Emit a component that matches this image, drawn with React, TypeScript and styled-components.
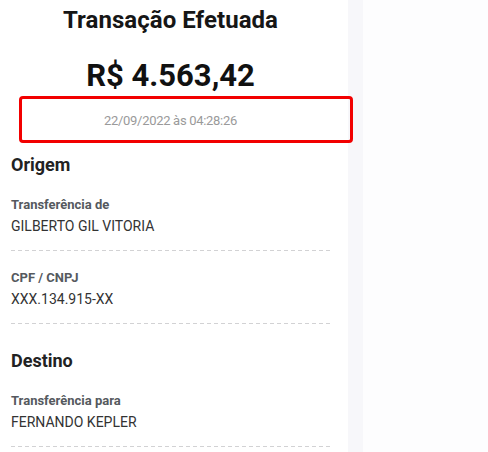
import React from "react";
import styled, { createGlobalStyle } from "styled-components";

const Global = createGlobalStyle`
  html, body { margin: 0; padding: 0; background: #fdfdfe; }
  body { font-family: Roboto, "Noto Sans", Arial, sans-serif; -webkit-font-smoothing: antialiased; }
  * { box-sizing: border-box; }
`;

const Screen = styled.div`
  display: flex;
  height: 452px;
  overflow: hidden;
`;

const Panel = styled.main`
  width: 348px;
  flex: none;
  background: #ffffff;
  padding: 5px 18px 0 11px;
  display: flex;
  flex-direction: column;
`;

const Strip = styled.div`
  width: 15px;
  flex: none;
  background: #f7f7fa;
`;

const Rest = styled.div`
  flex: 1;
  background: #fdfdfe;
`;

const Title = styled.h1`
  margin: 0;
  font-size: 24px;
  line-height: 30px;
  font-weight: 700;
  color: #161616;
  text-align: center;
  letter-spacing: 0.05px;
`;

const Amount = styled.div`
  margin-top: 23px;
  font-size: 31px;
  line-height: 36px;
  font-weight: 700;
  color: #111111;
  text-align: center;
`;

const DateLine = styled.div`
  position: relative;
  margin-top: 17px;
  font-size: 13px;
  line-height: 20px;
  color: #9a9a9a;
  text-align: center;
  letter-spacing: -0.3px;
`;

const Highlight = styled.span`
  position: absolute;
  left: 8px;
  top: -15px;
  width: 334px;
  height: 47px;
  border: 3px solid #f20000;
  border-radius: 4px;
  pointer-events: none;
`;

const Section = styled.section<{ $gap: number }>`
  margin-top: ${(p) => p.$gap}px;
  display: flex;
  flex-direction: column;
`;

const Heading = styled.h2`
  margin: 0 0 19px;
  font-size: 18px;
  line-height: 24px;
  font-weight: 700;
  color: #222222;
`;

const Row = styled.div<{ $first?: boolean }>`
  padding-top: ${(p) => (p.$first ? 0 : 18)}px;
  padding-bottom: 14px;
  display: flex;
  flex-direction: column;
`;

const Label = styled.div`
  font-size: 13px;
  line-height: 18px;
  font-weight: 700;
  color: #55595e;
`;

const Value = styled.div`
  margin-top: 2px;
  font-size: 14px;
  line-height: 20px;
  color: #333333;
`;

const Divider = styled.div`
  height: 1px;
  background-image: linear-gradient(to right, #d2d2d4 0 4px, transparent 4px 7px);
  background-size: 7px 1px;
  background-repeat: repeat-x;
`;

type Item = { label: string; value: string };

const origem: Item[] = [
  { label: "Transferência de", value: "GILBERTO GIL VITORIA" },
  { label: "CPF / CNPJ", value: "XXX.134.915-XX" },
];

const destino: Item[] = [{ label: "Transferência para", value: "FERNANDO KEPLER" }];

function Details({ title, items, gap }: { title: string; items: Item[]; gap: number }) {
  return (
    <Section $gap={gap}>
      <Heading>{title}</Heading>
      {items.map((it, i) => (
        <React.Fragment key={it.label}>
          <Row $first={i === 0}>
            <Label>{it.label}</Label>
            <Value>{it.value}</Value>
          </Row>
          <Divider />
        </React.Fragment>
      ))}
    </Section>
  );
}

export default function App() {
  return (
    <>
      <Global />
      <Screen>
        <Panel>
          <Title>Transação Efetuada</Title>
          <Amount>R$ 4.563,42</Amount>
          <DateLine>
            22/09/2022 às 04:28:26
            <Highlight />
          </DateLine>
          <Details title="Origem" items={origem} gap={22} />
          <Details title="Destino" items={destino} gap={25} />
        </Panel>
        <Strip />
        <Rest />
      </Screen>
    </>
  );
}
